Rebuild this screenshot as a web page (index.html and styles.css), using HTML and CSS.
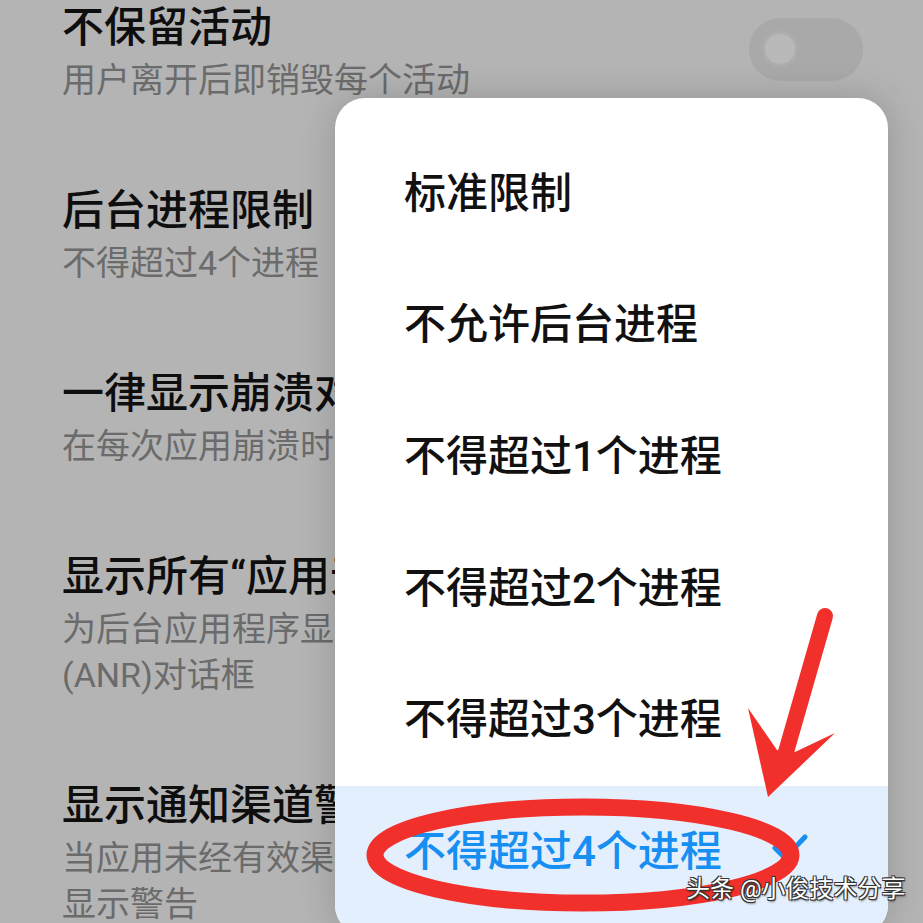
FILE: index.html
```html
<!DOCTYPE html>
<html lang="zh-CN">
<head>
    <meta charset="UTF-8">
    <meta name="viewport" content="width=device-width, initial-scale=1.0">
    <title>开发者选项</title>
    <link rel="stylesheet" href="styles.css">
</head>
<body>
    <!-- Developer options list (dimmed behind the popup) -->
    <section class="settings">
        <div class="row">
            <div class="row-text">
                <p class="title">不保留活动</p>
                <p class="summary">用户离开后即销毁每个活动</p>
            </div>
            <span class="switch"><span class="knob"></span></span>
        </div>
        <div class="row">
            <div class="row-text">
                <p class="title">后台进程限制</p>
                <p class="summary">不得超过4个进程</p>
            </div>
        </div>
        <div class="row">
            <div class="row-text">
                <p class="title">一律显示崩溃对话框</p>
                <p class="summary">在每次应用崩溃时显示对话框</p>
            </div>
            <span class="switch"><span class="knob"></span></span>
        </div>
        <div class="row">
            <div class="row-text">
                <p class="title">显示所有“应用无响应”</p>
                <p class="summary">为后台应用程序显示“应用无响应”<br>(ANR)对话框</p>
            </div>
            <span class="switch"><span class="knob"></span></span>
        </div>
        <div class="row">
            <div class="row-text">
                <p class="title">显示通知渠道警告</p>
                <p class="summary">当应用未经有效渠道发布通知时，在屏幕上<br>显示警告</p>
            </div>
            <span class="switch"><span class="knob"></span></span>
        </div>
    </section>

    <!-- Background process limit popup -->
    <div class="popup">
        <ul class="menu">
            <li>标准限制</li>
            <li>不允许后台进程</li>
            <li>不得超过1个进程</li>
            <li>不得超过2个进程</li>
            <li>不得超过3个进程</li>
            <li class="selected">
                <span>不得超过4个进程</span>
                <svg class="check" width="36" height="28" viewBox="0 0 36 28">
                    <polyline points="3,14 13,24 33,3" fill="none" stroke="#168ef2" stroke-width="5" stroke-linecap="round" stroke-linejoin="round"/>
                </svg>
            </li>
        </ul>
    </div>

    <!-- Hand-drawn marks -->
    <svg class="marks" width="923" height="923" viewBox="0 0 923 923">
        <ellipse cx="583" cy="855" rx="208" ry="48" fill="none" stroke="#f2302b" stroke-width="17"/>
        <line x1="825" y1="616" x2="786" y2="752" stroke="#f2302b" stroke-width="16" stroke-linecap="round"/>
        <polygon points="748,708 777,750 795,752 835,733 768,797" fill="#f2302b"/>
    </svg>

    <p class="watermark">头条 @小俊技术分享</p>
</body>
</html>
```

FILE: styles.css
```css
/* General */
* {
    margin: 0;
    padding: 0;
    box-sizing: border-box;
}
html, body {
    width: 100%;
    height: 100%;
    overflow: hidden;
}
body {
    position: relative;
    background: #b4b4b4;
    font-family: Roboto, "Noto Sans CJK SC", sans-serif;
}

/* Settings list */
.settings {
    margin-top: -38px;
    padding: 0 60px 0 62px;
}
.row {
    display: flex;
    align-items: center;
    gap: 20px;
    padding: 41px 0 42px;
}
.row-text {
    flex: 1;
}
.title {
    font-size: 42px;
    line-height: 50px;
    font-weight: 500;
    color: #0e0e0e;
    white-space: nowrap;
}
.summary {
    margin-top: 4px;
    font-size: 34px;
    line-height: 46px;
    color: #6b6b6b;
}
.switch {
    display: flex;
    align-items: center;
    flex-shrink: 0;
    width: 114px;
    height: 63px;
    margin-bottom: 8px;
    padding-left: 16px;
    border-radius: 32px;
    background: #a9a9a9;
}
.knob {
    width: 30px;
    height: 30px;
    border-radius: 50%;
    background: #b9b9b9;
    box-shadow: 0 0 0 3px #adadad;
}

/* Popup */
.popup {
    position: absolute;
    top: 98px;
    left: 335px;
    width: 553px;
    height: 837px;
    display: flex;
    flex-direction: column;
    padding-top: 30px;
    border-radius: 30px;
    background: #fff;
    overflow: hidden;
    box-shadow: 0 0 36px rgba(0,0,0,.18);
}
.menu {
    list-style: none;
    display: flex;
    flex-direction: column;
    flex: 1;
}
.menu li {
    display: flex;
    align-items: center;
    height: 131.6px;
    padding: 0 80px 0 69px;
    font-size: 42px;
    line-height: 52px;
    font-weight: 500;
    color: #111;
}
.menu li.selected {
    flex: 1;
    align-items: flex-start;
    padding-top: 40px;
    background: #e3effd;
    color: #168ef2;
}
.check {
    margin: 8px 0 0 auto;
}

/* Marks and watermark */
.marks {
    position: absolute;
    top: 0;
    left: 0;
    pointer-events: none;
}
.watermark {
    position: absolute;
    top: 874px;
    left: 686px;
    font-size: 24px;
    line-height: 30px;
    color: #fff;
    white-space: nowrap;
    text-shadow: -1px -1px 0 #333, 1px -1px 0 #333, -1px 1px 0 #333, 1px 1px 0 #333, 1px 2px 2px rgba(0,0,0,.5);
}
```
